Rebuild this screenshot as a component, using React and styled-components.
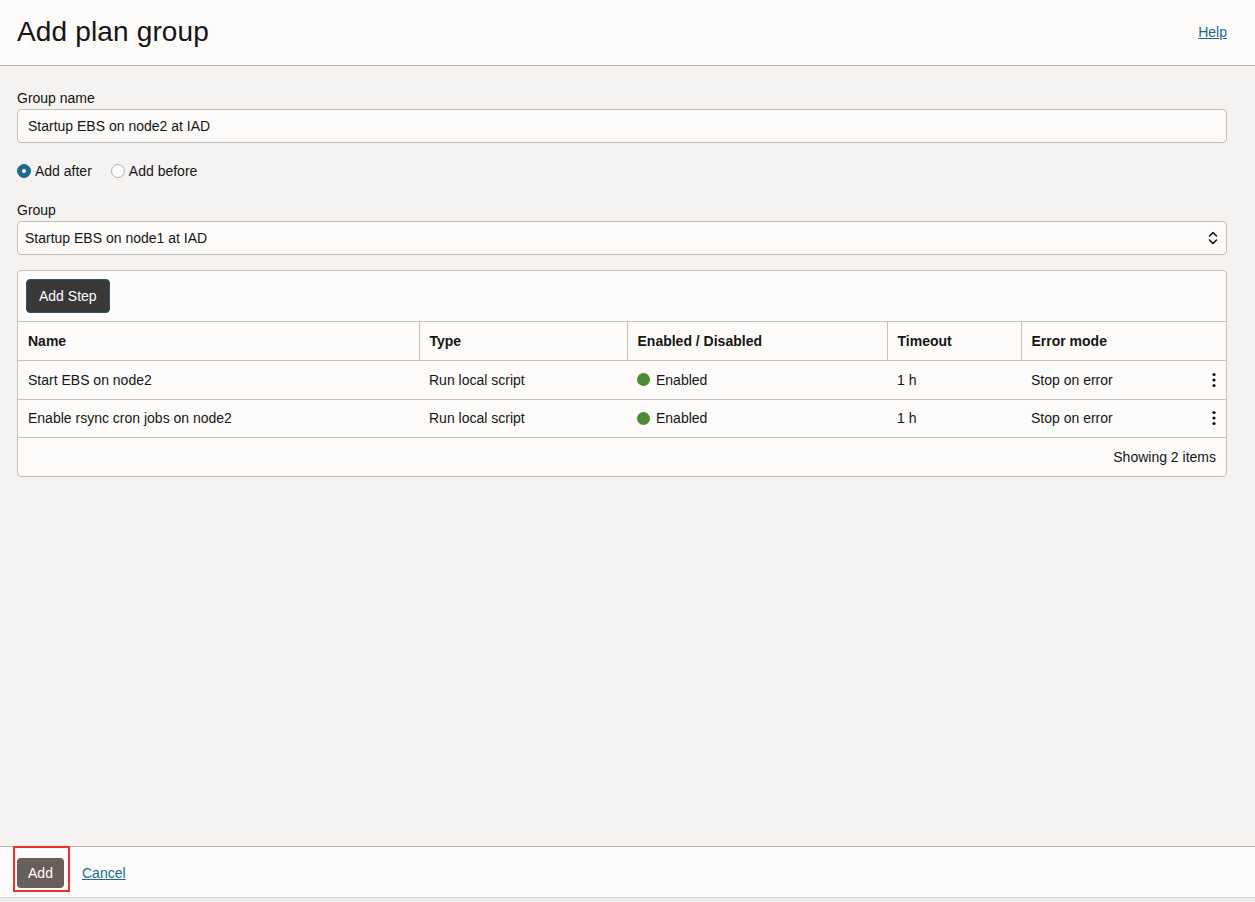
import styled, { createGlobalStyle } from "styled-components";

const GlobalStyle = createGlobalStyle`
    html, body {
        margin: 0;
        padding: 0;
    }
    body {
        font-family: "Liberation Sans", Arial, sans-serif;
        font-size: 14px;
        color: #161513;
        background: #f5f3f1;
    }
`;

const steps = [
    { name: "Start EBS on node2", type: "Run local script", status: "Enabled", timeout: "1 h", mode: "Stop on error" },
    { name: "Enable rsync cron jobs on node2", type: "Run local script", status: "Enabled", timeout: "1 h", mode: "Stop on error" },
];

// widths are content widths (cell padding is 10px each side)
const columns = [
    { label: "Name", width: 381 },
    { label: "Type", width: 188 },
    { label: "Enabled / Disabled", width: 240 },
    { label: "Timeout", width: 114 },
    { label: "Error mode" },
];

const SelectArrows = () => (
    <svg width="10" height="16" viewBox="0 0 10 16" fill="none" stroke="#161513" strokeWidth="1.6" strokeLinecap="round" strokeLinejoin="round">
        <polyline points="1.5,6 5,2.5 8.5,6" />
        <polyline points="1.5,10 5,13.5 8.5,10" />
    </svg>
);

const Kebab = () => (
    <svg width="4" height="16" viewBox="0 0 4 16" fill="#161513">
        <circle cx="2" cy="2.5" r="1.6" />
        <circle cx="2" cy="8" r="1.6" />
        <circle cx="2" cy="13.5" r="1.6" />
    </svg>
);

const App = () => {
    return (
        <Page>
            <GlobalStyle />
            <Header>
                <Title>Add plan group</Title>
                <Link href="#">Help</Link>
            </Header>
            <Main>
                <Label>Group name</Label>
                <TextInput>Startup EBS on node2 at IAD</TextInput>

                <RadioRow>
                    <RadioOption>
                        <Radio checked />
                        Add after
                    </RadioOption>
                    <RadioOption>
                        <Radio />
                        Add before
                    </RadioOption>
                </RadioRow>

                <Label $top={22}>Group</Label>
                <SelectBox>
                    <span>Startup EBS on node1 at IAD</span>
                    <SelectArrows />
                </SelectBox>

                <Card>
                    <Toolbar>
                        <DarkButton>Add Step</DarkButton>
                    </Toolbar>
                    <Table>
                        <colgroup>
                            {columns.map((c) => (
                                <col key={c.label} style={c.width ? { width: c.width + 20 } : undefined} />
                            ))}
                        </colgroup>
                        <thead>
                            <tr>
                                {columns.map((c, i) => (
                                    <Th key={c.label} $last={i === columns.length - 1}>{c.label}</Th>
                                ))}
                            </tr>
                        </thead>
                        <tbody>
                            {steps.map((s) => (
                                <tr key={s.name}>
                                    <Td>{s.name}</Td>
                                    <Td>{s.type}</Td>
                                    <Td>
                                        <Status>
                                            <Dot />
                                            {s.status}
                                        </Status>
                                    </Td>
                                    <Td>{s.timeout}</Td>
                                    <Td>
                                        <ModeCell>
                                            {s.mode}
                                            <Kebab />
                                        </ModeCell>
                                    </Td>
                                </tr>
                            ))}
                        </tbody>
                    </Table>
                    <CardFooter>Showing 2 items</CardFooter>
                </Card>
            </Main>
            <Footer>
                <Highlight>
                    <AddButton>Add</AddButton>
                </Highlight>
                <Link href="#">Cancel</Link>
            </Footer>
            <BottomStrip />
        </Page>
    );
};
export default App;

const Page = styled.div`
    display: flex;
    flex-direction: column;
    height: 902px;
    background: #f5f3f1;
`;

const Header = styled.header`
    height: 66px;
    flex-shrink: 0;
    display: flex;
    align-items: center;
    justify-content: space-between;
    padding: 0 28px 2px 17px;
    box-sizing: border-box;
    background: #fcfbfa;
    border-bottom: 1px solid #bcb6b1;
`;

const Title = styled.h1`
    margin: 0;
    font-size: 28px;
    font-weight: 400;
    letter-spacing: 0.15px;
    color: #161513;
`;

const Link = styled.a`
    color: #1b6a8c;
    text-decoration: underline;
    font-size: 14px;
`;

const Main = styled.main`
    flex: 1;
    padding: 24px 28px 0 17px;
    display: flex;
    flex-direction: column;
`;

const Label = styled.label`
    display: block;
    font-size: 14px;
    line-height: 16px;
    margin-top: ${(p) => p.$top || 0}px;
    margin-bottom: 3px;
`;

const fieldBox = `
    height: 34px;
    box-sizing: border-box;
    background: #fcfbfa;
    border: 1px solid #c4bfba;
    border-radius: 4px;
    display: flex;
    align-items: center;
`;

const TextInput = styled.div`
    ${fieldBox}
    padding: 0 10px;
`;

const SelectBox = styled.div`
    ${fieldBox}
    padding: 0 8px 0 7px;
    justify-content: space-between;
`;

const RadioRow = styled.div`
    display: flex;
    align-items: center;
    gap: 19px;
    margin-top: 19px;
    height: 18px;
`;

const RadioOption = styled.label`
    display: flex;
    align-items: center;
    gap: 4px;
    font-size: 14px;
`;

const Radio = styled.span`
    width: 14px;
    height: 14px;
    box-sizing: border-box;
    border-radius: 50%;
    border: 1px solid ${(p) => (p.checked ? "#1b6a8c" : "#b5afaa")};
    background: ${(p) => (p.checked ? "#1b6a8c" : "#fff")};
    display: flex;
    align-items: center;
    justify-content: center;
    &::after {
        content: "";
        width: 4px;
        height: 4px;
        border-radius: 50%;
        background: #fff;
        display: ${(p) => (p.checked ? "block" : "none")};
    }
`;

const Card = styled.div`
    margin-top: 15px;
    background: #fcfbfa;
    border: 1px solid #c4bfba;
    border-radius: 4px;
    overflow: hidden;
`;

const Toolbar = styled.div`
    height: 51px;
    box-sizing: border-box;
    display: flex;
    align-items: center;
    padding: 0 8px;
    border-bottom: 1px solid #c4bfba;
`;

const DarkButton = styled.button`
    height: 34px;
    padding: 0 12px;
    background: #3a3836;
    color: #fff;
    border: 1px solid #1f5a6e;
    border-radius: 4px;
    font-family: inherit;
    font-size: 14px;
`;

const Table = styled.table`
    width: 100%;
    border-collapse: collapse;
    table-layout: fixed;
    font-size: 14px;
`;

const Th = styled.th`
    height: 38px;
    padding: 0 10px;
    text-align: left;
    font-weight: 700;
    border-right: ${(p) => (p.$last ? "none" : "1px solid #c4bfba")};
    border-bottom: 1px solid #c4bfba;
`;

const Td = styled.td`
    height: 37.5px;
    padding: 0 10px;
    border-bottom: 1px solid #c4bfba;
`;

const Status = styled.span`
    display: flex;
    align-items: center;
    gap: 6px;
`;

const Dot = styled.span`
    width: 13px;
    height: 13px;
    border-radius: 50%;
    background: #4d8a32;
`;

const ModeCell = styled.span`
    display: flex;
    align-items: center;
    justify-content: space-between;
`;

const CardFooter = styled.div`
    height: 38px;
    display: flex;
    align-items: center;
    justify-content: flex-end;
    padding: 0 10px;
`;

const Footer = styled.footer`
    height: 51px;
    flex-shrink: 0;
    box-sizing: border-box;
    display: flex;
    align-items: center;
    gap: 18px;
    padding: 2px 17px 0;
    background: #fcfbfa;
    border-top: 1px solid #bcb6b1;
`;

const Highlight = styled.span`
    position: relative;
    display: inline-flex;
    &::after {
        content: "";
        position: absolute;
        top: -12px;
        left: -4px;
        right: -6px;
        bottom: -4px;
        border: 2px solid #e8322b;
        pointer-events: none;
    }
`;

const AddButton = styled.button`
    height: 30px;
    width: 47px;
    background: #665f5a;
    color: #fff;
    border: none;
    border-radius: 4px;
    font-family: inherit;
    font-size: 14px;
`;

const BottomStrip = styled.div`
    height: 4px;
    flex-shrink: 0;
    background: #ededed;
    border-top: 1px solid #d9d9d9;
`;
